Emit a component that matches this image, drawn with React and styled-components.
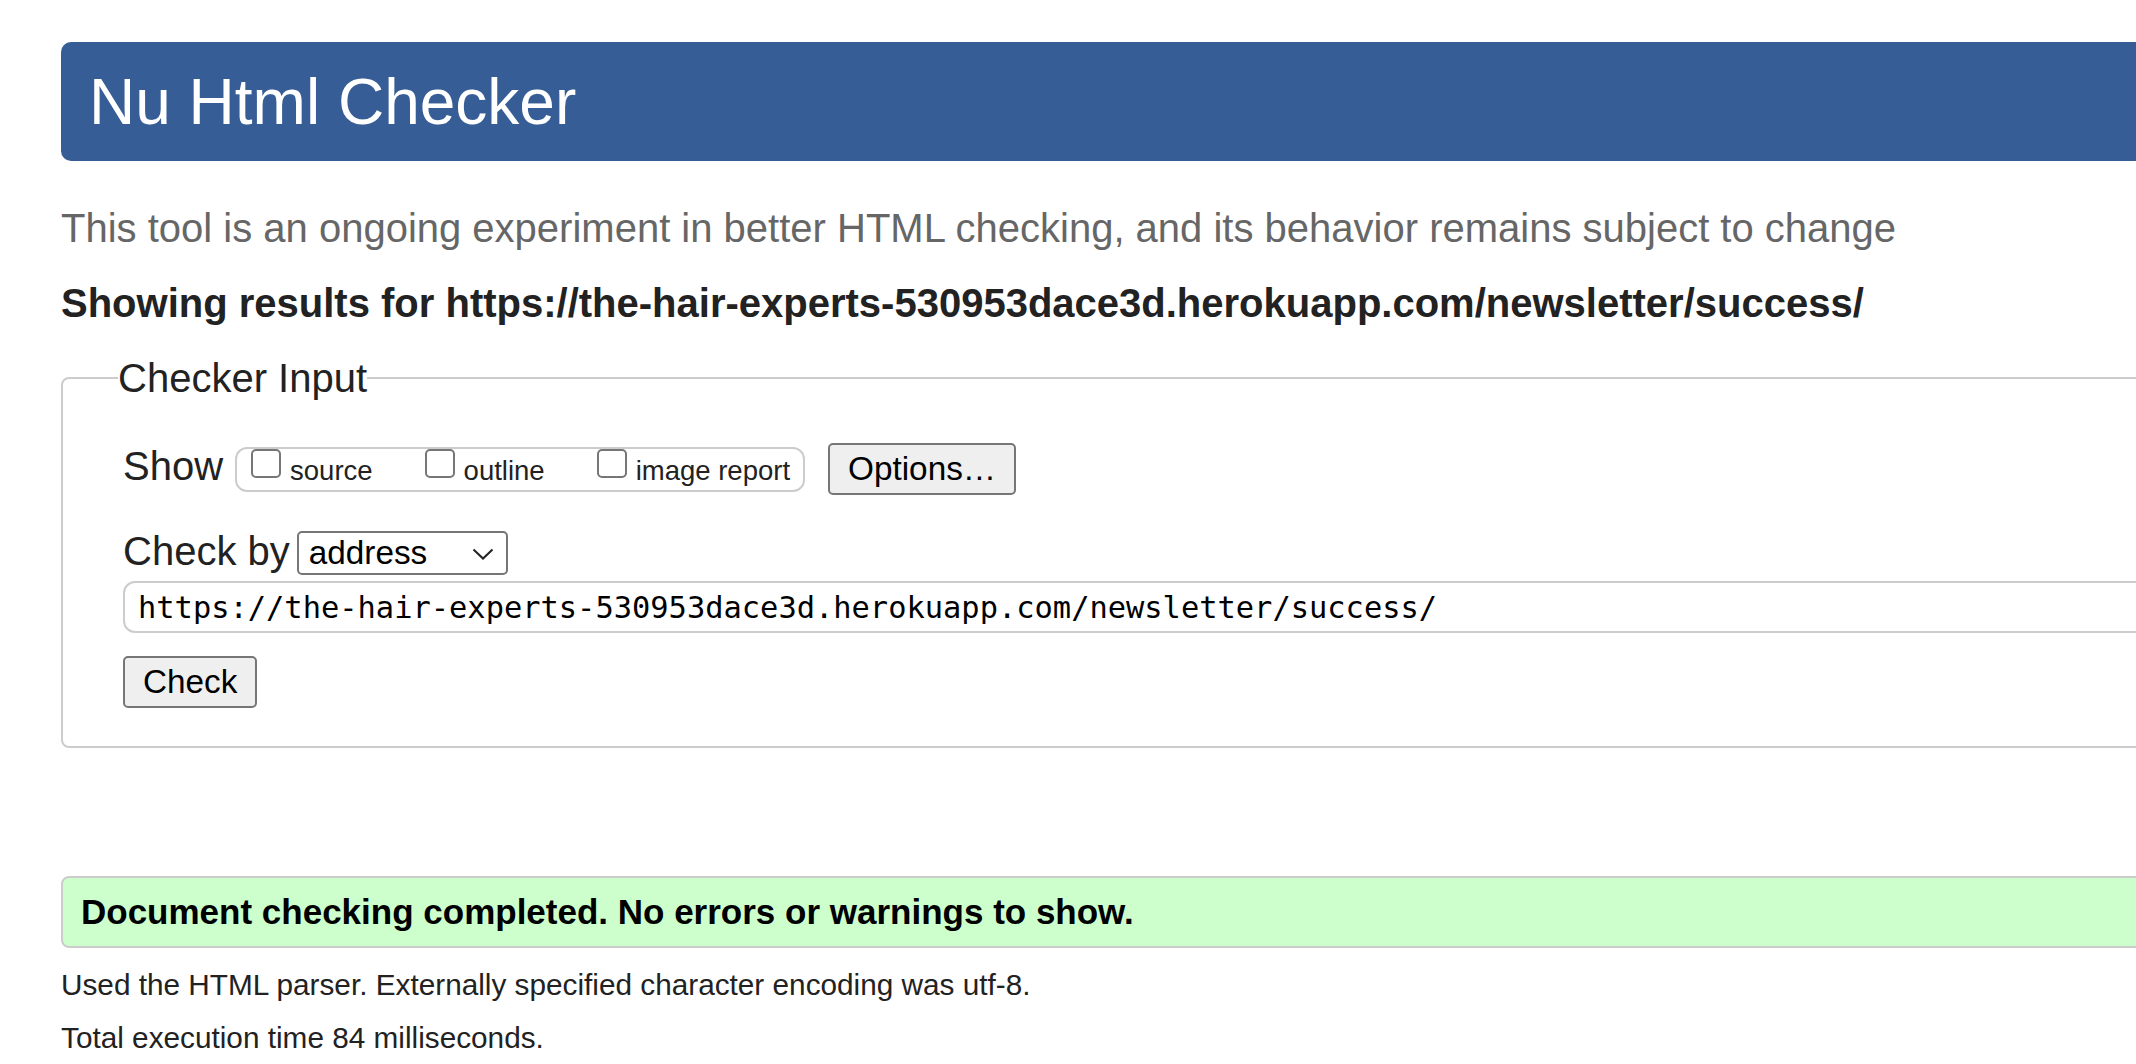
import React from 'react';
import styled, { createGlobalStyle } from 'styled-components';

const GlobalStyle = createGlobalStyle`
	html, body {
		margin: 0;
		padding: 0;
		background: #fff;
		overflow: hidden;
	}
	body {
		font-family: "Liberation Sans", Arial, sans-serif;
		color: #222;
	}
`;

const url = 'https://the-hair-experts-530953dace3d.herokuapp.com/newsletter/success/';

const options = ['source', 'outline', 'image report'];

const App = () => {
	return (
		<Page>
			<GlobalStyle />
			<Header>
				<Title>Nu Html Checker</Title>
			</Header>
			<About>
				This tool is an ongoing experiment in better HTML checking, and its behavior remains subject to change
			</About>
			<Results>Showing results for {url}</Results>

			<InputBox>
				<Legend>Checker Input</Legend>
				<ShowRow>
					<RowLabel $lift={6}>Show</RowLabel>
					<OptionGroup>
						{options.map(opt => (
							<OptionItem key={opt}>
								<Checkbox type='checkbox' />
								<OptionText>{opt}</OptionText>
							</OptionItem>
						))}
					</OptionGroup>
					<Button $ml={23}>Options…</Button>
				</ShowRow>
				<CheckByRow>
					<RowLabel $lift={4}>Check by</RowLabel>
					<SelectBox>
						<span>address</span>
						<svg width='22' height='12' viewBox='0 0 22 12'>
							<polyline points='1.5,1.5 11,10.5 20.5,1.5' fill='none' stroke='#222' strokeWidth='2' />
						</svg>
					</SelectBox>
				</CheckByRow>
				<UrlInput type='text' defaultValue={url} />
				<Button $mt={23}>Check</Button>
			</InputBox>

			<Success>Document checking completed. No errors or warnings to show.</Success>
			<Note>Used the HTML parser. Externally specified character encoding was utf-8.</Note>
			<Note $mt={18}>Total execution time 84 milliseconds.</Note>
		</Page>
	);
};

const Page = styled.div`
	width: 2300px;
	padding: 42px 0 0 61px;
`;

const Header = styled.header`
	background-color: #365d95;
	border-radius: 10px 0 0 10px;
	padding: 23px 28px 22px;
`;

const Title = styled.h1`
	margin: 0;
	font-size: 64px;
	font-weight: normal;
	line-height: 74px;
	color: #fff;
`;

const About = styled.p`
	margin: 44px 0 0;
	font-size: 40px;
	line-height: 46px;
	color: #666;
	white-space: nowrap;
`;

const Results = styled.p`
	margin: 29px 0 0;
	font-size: 40px;
	font-weight: 700;
	line-height: 46px;
	color: #222;
	white-space: nowrap;
`;

const InputBox = styled.fieldset`
	margin: 29px 0 0;
	min-width: 0;
	border: 2px solid #ccc;
	border-radius: 8px;
	padding: 42px 0 38px 60px;
`;

const Legend = styled.legend`
	margin-left: -5px;
	padding: 0;
	font-size: 40px;
	line-height: 46px;
	color: #222;
`;

const ShowRow = styled.div`
	display: flex;
	align-items: center;
	height: 52px;
`;

const CheckByRow = styled.div`
	display: flex;
	align-items: center;
	height: 44px;
	margin-top: 36px;
`;

const RowLabel = styled.span`
	font-size: 40px;
	line-height: 46px;
	margin-right: ${p => (p.$lift === 6 ? 12 : 7)}px;
	margin-bottom: ${p => p.$lift}px;
	white-space: nowrap;
`;

const OptionGroup = styled.div`
	display: flex;
	align-items: flex-start;
	gap: 52px;
	box-sizing: border-box;
	height: 45px;
	border: 2px solid #ccc;
	border-radius: 12px;
	padding: 0 13px 0 14px;
`;

const OptionItem = styled.label`
	display: flex;
	align-items: flex-start;
`;

const Checkbox = styled.input`
	appearance: none;
	box-sizing: border-box;
	width: 30px;
	height: 29px;
	margin: 0 9px 0 0;
	border: 2px solid #767676;
	border-radius: 5px;
	background: #fff;
`;

const OptionText = styled.span`
	margin-top: 6px;
	font-size: 27.5px;
	line-height: 31.6px;
	white-space: nowrap;
`;

const Button = styled.button`
	box-sizing: border-box;
	display: block;
	height: 52px;
	margin: ${p => p.$mt || 0}px 0 0 ${p => p.$ml || 0}px;
	padding: 0 18px;
	font-family: "Liberation Sans", Arial, sans-serif;
	font-size: 33.3px;
	color: #000;
	background-color: #efefef;
	border: 2px solid #767676;
	border-radius: 5px;
	white-space: nowrap;
`;

const SelectBox = styled.div`
	box-sizing: border-box;
	width: 211px;
	height: 44px;
	display: flex;
	align-items: center;
	justify-content: space-between;
	padding: 0 12px 0 10px;
	border: 2px solid #767676;
	border-radius: 5px;
	font-size: 33.3px;
	color: #000;
	svg {
		margin-top: 2px;
	}
`;

const UrlInput = styled.input`
	display: block;
	box-sizing: border-box;
	width: 100%;
	height: 52px;
	margin-top: 6px;
	padding: 0 13px;
	border: 2px solid #ccc;
	border-radius: 12px;
	font-family: "DejaVu Sans Mono", "Liberation Mono", monospace;
	font-size: 30.4px;
	color: #000;
	outline: none;
`;

const Success = styled.div`
	margin-top: 128px;
	padding: 14px 18px;
	border: 2px solid #ccc;
	border-radius: 8px;
	background-color: #ccffcc;
	font-size: 35px;
	font-weight: 700;
	line-height: 40px;
	color: #000;
`;

const Note = styled.p`
	margin: ${p => p.$mt || 20}px 0 0;
	font-size: 29.75px;
	line-height: 34.5px;
	color: #222;
`;

export default App;
